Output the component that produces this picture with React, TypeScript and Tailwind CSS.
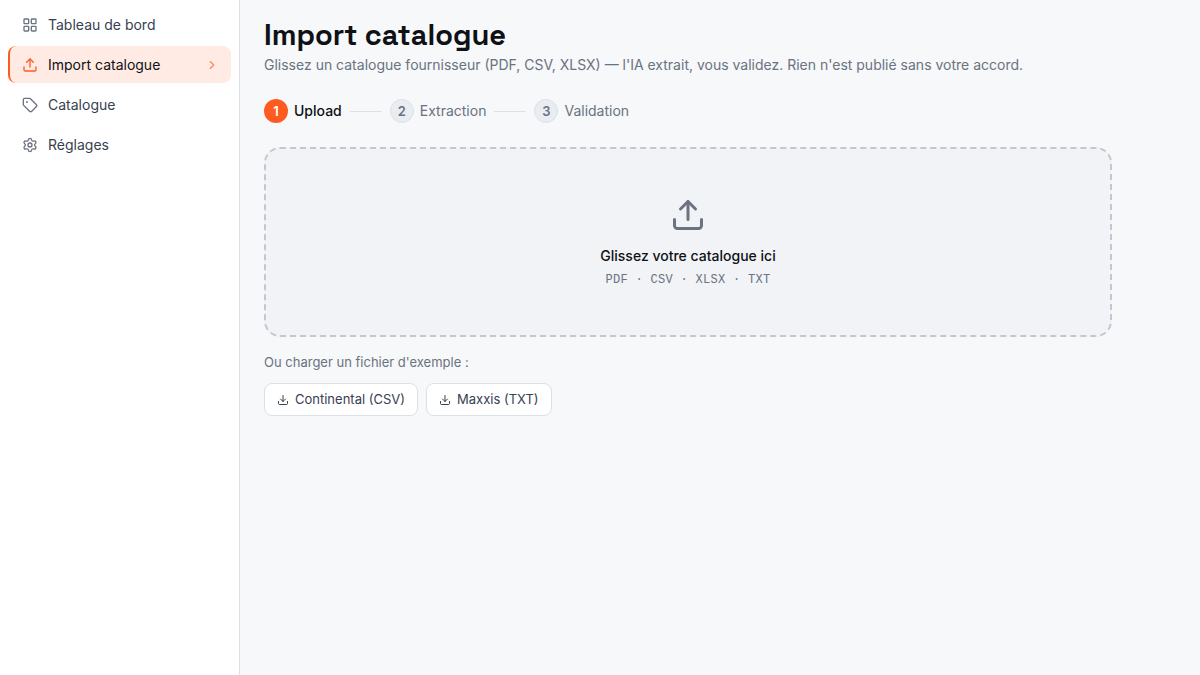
import React from 'react';
import { ChevronRight, Download, LayoutGrid, Settings, Tag, Upload } from 'lucide-react';

const navItems = [
  { label: 'Tableau de bord', icon: LayoutGrid, href: '#dashboard', active: false },
  { label: 'Import catalogue', icon: Upload, href: '#import', active: true },
  { label: 'Catalogue', icon: Tag, href: '#catalogue', active: false },
  { label: 'Réglages', icon: Settings, href: '#settings', active: false },
];

const steps = ['Upload', 'Extraction', 'Validation'];

const samples = ['Continental (CSV)', 'Maxxis (TXT)'];

const Sidebar: React.FC = () => {
  return (
    <aside className="w-60 shrink-0 border-r border-[#dce1e8] bg-white px-2 py-1.5">
      <nav className="flex flex-col gap-[3px]">
        {navItems.map(({ label, icon: Icon, href, active }) => (
          <a
            key={label}
            href={href}
            aria-current={active ? 'page' : undefined}
            className={
              active
                ? 'flex items-center gap-2.5 rounded-lg border-l-2 border-[#ff5a1f] bg-[#ffebe4] px-3 py-2 text-sm leading-[21px] text-[#0f1115]'
                : 'flex items-center gap-2.5 rounded-lg border-l-2 border-transparent px-3 py-2 text-sm leading-[21px] text-[#374151]'
            }
          >
            <Icon size={16} className={active ? 'text-[#ff5a1f]' : 'text-[#6b7280]'} />
            <span className="flex-1">{label}</span>
            {active && <ChevronRight size={14} className="text-[#ff5a1f] opacity-70" />}
          </a>
        ))}
      </nav>
    </aside>
  );
};

const Stepper: React.FC = () => {
  return (
    <ol className="mt-6 flex items-center gap-2">
      {steps.map((step, i) => (
        <React.Fragment key={step}>
          {i > 0 && <li aria-hidden="true" className="h-px w-8 bg-[#dce1e8]" />}
          <li className="flex items-center gap-1.5">
            <span
              className={
                i === 0
                  ? 'flex size-6 items-center justify-center rounded-full bg-[#ff5a1f] text-[13px] leading-5 font-semibold text-white'
                  : 'flex size-6 items-center justify-center rounded-full border border-[#dce1e8] bg-[#e9edf2] text-[13px] leading-5 font-semibold text-[#6b7280]'
              }
            >
              {i + 1}
            </span>
            <span className={i === 0 ? 'text-sm font-medium text-[#0f1115]' : 'text-sm text-[#6b7280]'}>{step}</span>
          </li>
        </React.Fragment>
      ))}
    </ol>
  );
};

const App: React.FC = () => {
  return (
    <div className="flex min-h-screen bg-[#f6f8fa] font-['Inter',sans-serif]">
      <Sidebar />
      <main className="min-w-0 flex-1 px-6 py-5">
        <div className="max-w-[848px]">
          <h1 className="font-['Space_Grotesk','Inter',sans-serif] text-[29px] leading-[30px] font-semibold text-[#0f1115]">
            Import catalogue
          </h1>
          <p className="mt-[5px] text-sm text-[#6b7280]">
            Glissez un catalogue fournisseur (PDF, CSV, XLSX) — l'IA extrait, vous validez. Rien n'est publié sans votre accord.
          </p>
          <Stepper />
          <button
            type="button"
            className="mt-6 flex w-full flex-col items-center rounded-2xl border-2 border-dashed border-[#c2c8d2] bg-[#f1f3f7] pt-12 pb-[47px]"
          >
            <Upload size={36} className="text-[#6b7280]" />
            <span className="mt-[13px] text-sm font-medium text-[#0f1115]">Glissez votre catalogue ici</span>
            <span className="mt-1.5 font-['Liberation_Mono',monospace] text-xs tracking-wide text-[#6b7280]">
              PDF · CSV · XLSX · TXT
            </span>
          </button>
          <p className="mt-4 text-[13px] leading-[19px] text-[#6b7280]">Ou charger un fichier d'exemple :</p>
          <div className="mt-[11px] flex flex-wrap gap-2">
            {samples.map((sample) => (
              <button
                key={sample}
                type="button"
                className="flex items-center gap-1.5 rounded-lg border border-[#dce1e8] bg-white px-3 py-1.5 text-[13px] leading-[19px] text-[#374151]"
              >
                <Download size={12} />
                {sample}
              </button>
            ))}
          </div>
        </div>
      </main>
    </div>
  );
};

export default App;
